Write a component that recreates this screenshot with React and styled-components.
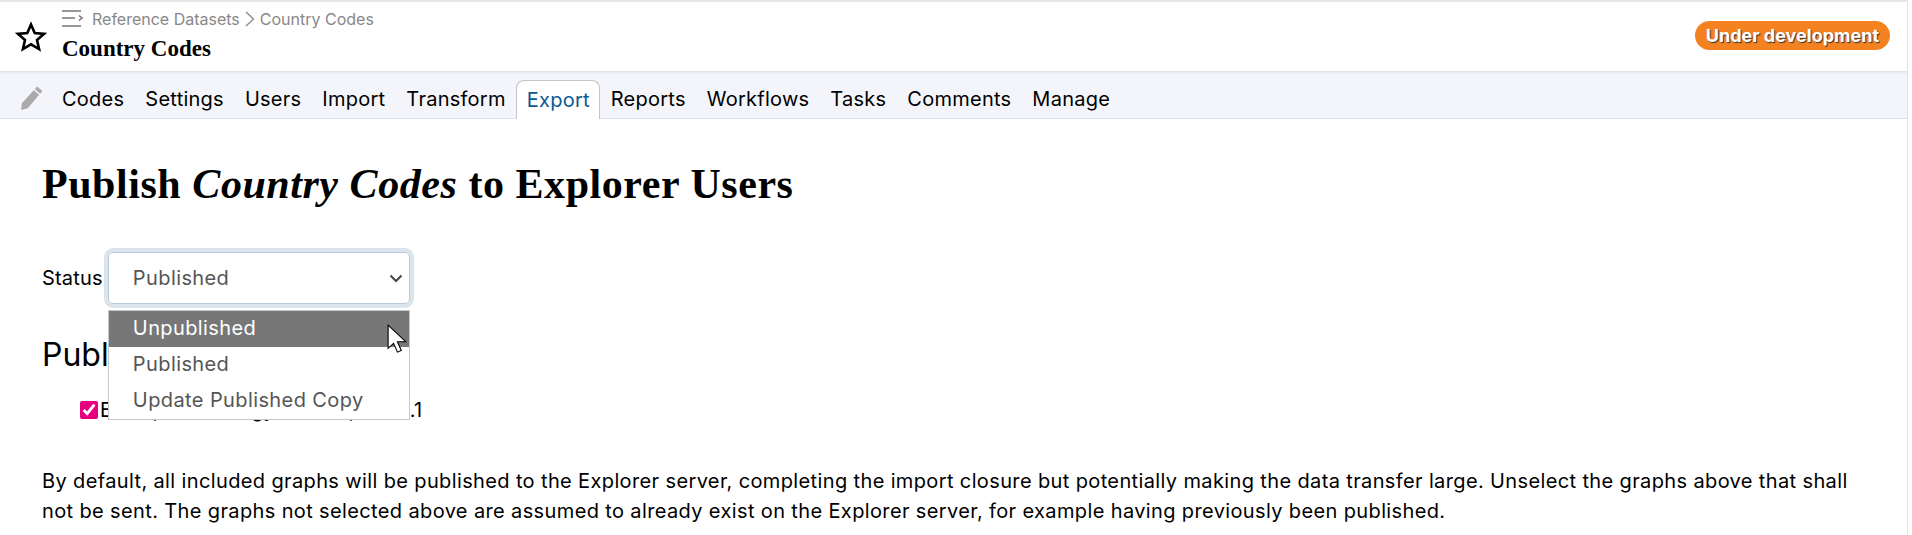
import React from 'react';
import styled, { createGlobalStyle } from 'styled-components';

const GlobalStyle = createGlobalStyle`
  html, body {
    margin: 0;
    padding: 0;
    background: #fff;
    overflow: hidden;
  }
  body {
    font-family: "Inter", "Open Sans", sans-serif;
    color: #000;
  }
`;

const Page = styled.div`
  width: 1908px;
  height: 535px;
  border-right: 1px solid #e4e4e8;
  border-top: 2px solid #e6e6e6;
  box-sizing: border-box;
  position: relative;
  overflow: hidden;
`;

const Header = styled.header`
  height: 69px;
  display: flex;
  align-items: center;
  padding: 0 17px 0 15px;
`;

const StarButton = styled.div`
  width: 32px;
  height: 32px;
  margin-right: 15px;
  flex: none;
`;

const TitleBlock = styled.div`
  flex: 1;
  display: flex;
  flex-direction: column;
  gap: 8px;
  margin-top: -4px;
`;

const Breadcrumb = styled.div`
  display: flex;
  align-items: center;
  gap: 7px;
  color: #888;
  font-size: 16px;
  line-height: 20px;
`;

const Crumbs = styled.span`
  display: flex;
  align-items: center;
  gap: 5px;
`;

const DatasetTitle = styled.h2`
  margin: 0;
  font-family: "Liberation Serif", serif;
  font-weight: 700;
  font-size: 23px;
  line-height: 24px;
`;

const Badge = styled.span`
  background: #f58220;
  color: #fff;
  font-weight: 700;
  font-size: 18px;
  line-height: 29px;
  padding: 0 11px;
  margin-top: -2px;
  border-radius: 15px;
  text-shadow: 1px 1px 1px #333;
`;

const TabBar = styled.nav`
  height: 48px;
  box-sizing: border-box;
  background: #f4f5fa;
  border-bottom: 1px solid #dfe1e6;
  box-shadow: inset 0 3px 3px -2px #d8d8dc;
  display: flex;
  align-items: flex-end;
  padding-left: 19px;
`;

const PencilWrap = styled.div`
  width: 24px;
  height: 24px;
  margin: 0 8.5px 8px 0;
`;

const Tab = styled.a`
  font-size: 20px;
  letter-spacing: 0.25px;
  line-height: 38px;
  padding: 0 9.5px;
  margin-bottom: ${({ $active }) => ($active ? '-1px' : '0')};
  color: ${({ $active }) => ($active ? '#0a5a94' : '#000')};
  background: ${({ $active }) => ($active ? '#fff' : 'transparent')};
  border: 1px solid ${({ $active }) => ($active ? '#c4c4c8' : 'transparent')};
  border-bottom: none;
  border-radius: 8px 8px 0 0;
  height: 38px;
  box-sizing: content-box;
`;

const Main = styled.main`
  padding: 42px 42px 0;
`;

const PageTitle = styled.h1`
  margin: 0 0 45px;
  font-family: "Liberation Serif", serif;
  font-weight: 700;
  font-size: 42px;
  letter-spacing: 0.55px;
  line-height: 46px;
  em {
    font-style: italic;
  }
`;

const StatusRow = styled.div`
  display: flex;
  align-items: center;
  gap: 5px;
  font-size: 20px;
  letter-spacing: 0.2px;
  height: 52px;
`;

const SelectWrap = styled.div`
  position: relative;
  width: 302px;
`;

const SelectBox = styled.div`
  height: 52px;
  box-sizing: border-box;
  border: 1px solid #b9c9da;
  border-radius: 5px;
  box-shadow: 0 0 0 4px #dbe5ee;
  display: flex;
  align-items: center;
  justify-content: space-between;
  padding: 0 5px 1px 24px;
  font-size: 20px;
  letter-spacing: 0.4px;
  color: #555;
`;

const Dropdown = styled.ul`
  position: absolute;
  top: 58px;
  left: 0;
  right: 0;
  margin: 0;
  padding: 0;
  list-style: none;
  background: #fff;
  border: 1px solid #c8c8c8;
  z-index: 2;
`;

const Option = styled.li`
  height: 36px;
  line-height: 35px;
  padding-left: 24px;
  font-size: 20px;
  letter-spacing: 0.4px;
  color: ${({ $hover }) => ($hover ? '#fff' : '#555')};
  background: ${({ $hover }) => ($hover ? '#777' : 'transparent')};
`;

const Cursor = styled.svg`
  position: absolute;
  left: 279px;
  top: 72px;
  z-index: 3;
`;

const SectionTitle = styled.h3`
  margin: 32px 0 24px;
  font-weight: 400;
  font-size: 32px;
  line-height: 38px;
`;

const GraphRow = styled.label`
  display: flex;
  align-items: center;
  gap: 2px;
  margin-left: 38px;
  font-size: 20px;
  letter-spacing: 0.2px;
  line-height: 24px;
`;

const Check = styled.input`
  width: 18px;
  height: 18px;
  margin: 0;
  accent-color: #e6007e;
`;

const Note = styled.p`
  margin: 44px 0 0;
  width: 1810px;
  font-size: 20px;
  letter-spacing: 0.37px;
  line-height: 30px;
`;

const tabs = ['Codes', 'Settings', 'Users', 'Import', 'Transform', 'Export', 'Reports', 'Workflows', 'Tasks', 'Comments', 'Manage'];

export default function App() {
  return (
    <Page>
      <GlobalStyle />
      <Header>
        <StarButton>
          <svg width="32" height="32" viewBox="0 0 32 32">
            <path d="M16 3.5l3.7 8.6 9.3.8-7 6.1 2.1 9.1L16 23.3l-8.1 4.8L10 19l-7-6.1 9.3-.8z" fill="none" stroke="#000" strokeWidth="2.6" strokeLinejoin="miter" />
          </svg>
        </StarButton>
        <TitleBlock>
          <Breadcrumb>
            <svg width="23" height="20" viewBox="0 0 23 20" fill="none" stroke="#777" strokeWidth="1.6">
              <path d="M0 2h19M0 9h13M0 17h19M17 6.5l3 2.5-3 2.5" />
            </svg>
            <Crumbs>
              Reference Datasets
              <svg width="10" height="18" viewBox="0 0 10 18" fill="none" stroke="#888" strokeWidth="1.3">
                <path d="M1 2l7.5 7L1 16" />
              </svg>
              Country Codes
            </Crumbs>
          </Breadcrumb>
          <DatasetTitle>Country Codes</DatasetTitle>
        </TitleBlock>
        <Badge>Under development</Badge>
      </Header>
      <TabBar>
        <PencilWrap>
          <svg width="24" height="24" viewBox="0 0 22 22">
            <path d="M16.5 0.5l5 4-2 2.5-5-4zM13.5 4l5 4L8 20.5l-6 1.5 .5-6z" fill="#aaa" />
          </svg>
        </PencilWrap>
        {tabs.map((t) => (
          <Tab key={t} $active={t === 'Export'}>{t}</Tab>
        ))}
      </TabBar>
      <Main>
        <PageTitle>Publish <em>Country Codes</em> to Explorer Users</PageTitle>
        <StatusRow>
          <span>Status</span>
          <SelectWrap>
            <SelectBox>
              Published
              <svg width="16" height="16" viewBox="0 0 16 16" fill="none" stroke="#444" strokeWidth="2">
                <path d="M2.5 5.5L8 11l5.5-5.5" />
              </svg>
            </SelectBox>
            <Dropdown>
              <Option $hover>Unpublished</Option>
              <Option>Published</Option>
              <Option>Update Published Copy</Option>
            </Dropdown>
            <Cursor width="22" height="31" viewBox="0 0 20 28">
              <path d="M1 1v21l5-4.5 3.5 8 3.5-1.5-3.5-8H17z" fill="#fff" stroke="#000" strokeWidth="1" />
            </Cursor>
          </SelectWrap>
        </StatusRow>
        <SectionTitle>Publish Graphs</SectionTitle>
        <GraphRow>
          <Check type="checkbox" defaultChecked readOnly />
          <span>Example Ontology - Example 1.0.1</span>
        </GraphRow>
        <Note>
          By default, all included graphs will be published to the Explorer server, completing the import closure but potentially making the data transfer large. Unselect the graphs above that shall not be sent. The graphs not selected above are assumed to already exist on the Explorer server, for example having previously been published.
        </Note>
      </Main>
    </Page>
  );
}
